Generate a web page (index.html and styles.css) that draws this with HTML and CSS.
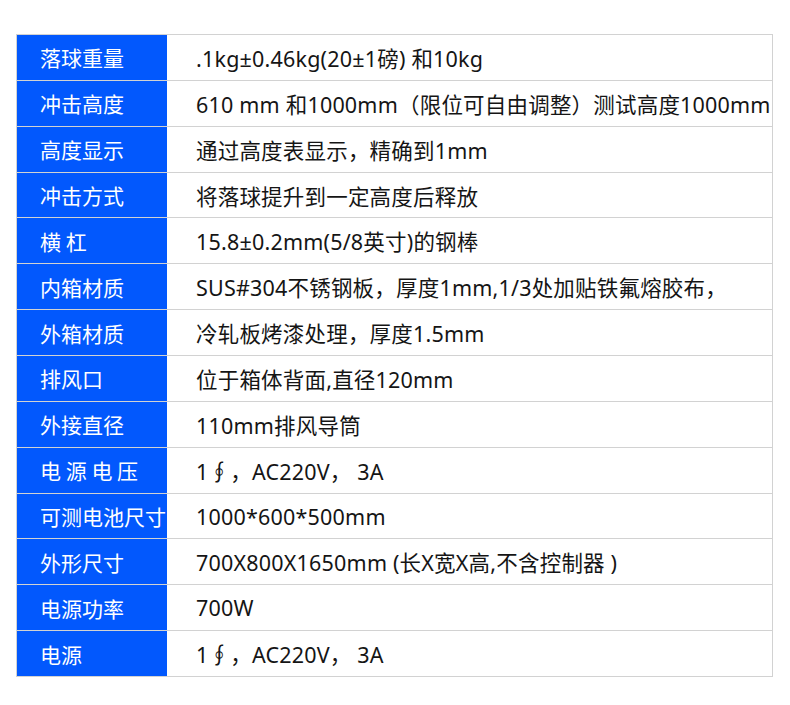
FILE: index.html
```html
<!DOCTYPE html>
<html lang="zh">
<head>
<meta charset="utf-8">
<link rel="stylesheet" href="styles.css">
</head>
<body>
<div class="spec">
  <div class="k">落球重量</div><div class="v">.1kg±0.46kg(20±1磅) 和10kg</div>
  <div class="k">冲击高度</div><div class="v">610 mm 和1000mm（限位可自由调整）测试高度1000mm</div>
  <div class="k">高度显示</div><div class="v">通过高度表显示，精确到1mm</div>
  <div class="k">冲击方式</div><div class="v">将落球提升到一定高度后释放</div>
  <div class="k">横 杠</div><div class="v">15.8±0.2mm(5/8英寸)的钢棒</div>
  <div class="k">内箱材质</div><div class="v">SUS#304不锈钢板，厚度1mm,1/3处加贴铁氟熔胶布，</div>
  <div class="k">外箱材质</div><div class="v">冷轧板烤漆处理，厚度1.5mm</div>
  <div class="k">排风口</div><div class="v">位于箱体背面,直径120mm</div>
  <div class="k">外接直径</div><div class="v">110mm排风导筒</div>
  <div class="k">电 源 电 压</div><div class="v">1∮，AC220V， 3A</div>
  <div class="k">可测电池尺寸</div><div class="v">1000*600*500mm</div>
  <div class="k">外形尺寸</div><div class="v">700X800X1650mm (长X宽X高,不含控制器 )</div>
  <div class="k">电源功率</div><div class="v">700W</div>
  <div class="k">电源</div><div class="v">1∮，AC220V， 3A</div>
</div>
</body>
</html>
```

FILE: styles.css
```css
html, body {
  margin: 0;
  padding: 0;
  background: #fff;
}
body {
  padding: 34px 0 0 16px;
  font-family: "Noto Sans", "Noto Sans CJK SC", sans-serif;
}
.spec {
  width: 757px;
  box-sizing: border-box;
  border: 1px solid #d2d2d2;
  border-bottom: none;
  display: grid;
  grid-template-columns: 150px 1fr;
  grid-auto-rows: 45.86px;
}
.k, .v {
  box-sizing: border-box;
  border-bottom: 1px solid #d2d2d2;
  display: flex;
  align-items: center;
  white-space: nowrap;
}
.k {
  background: #0258fd;
  color: #fff;
  padding-left: 23px;
  font-size: 21px;
  font-family: "Noto Sans CJK SC", sans-serif;
}
.v {
  color: #151515;
  padding-left: 29px;
  font-size: 21.5px;
  letter-spacing: 0.2px;
  overflow: hidden;
}
```
